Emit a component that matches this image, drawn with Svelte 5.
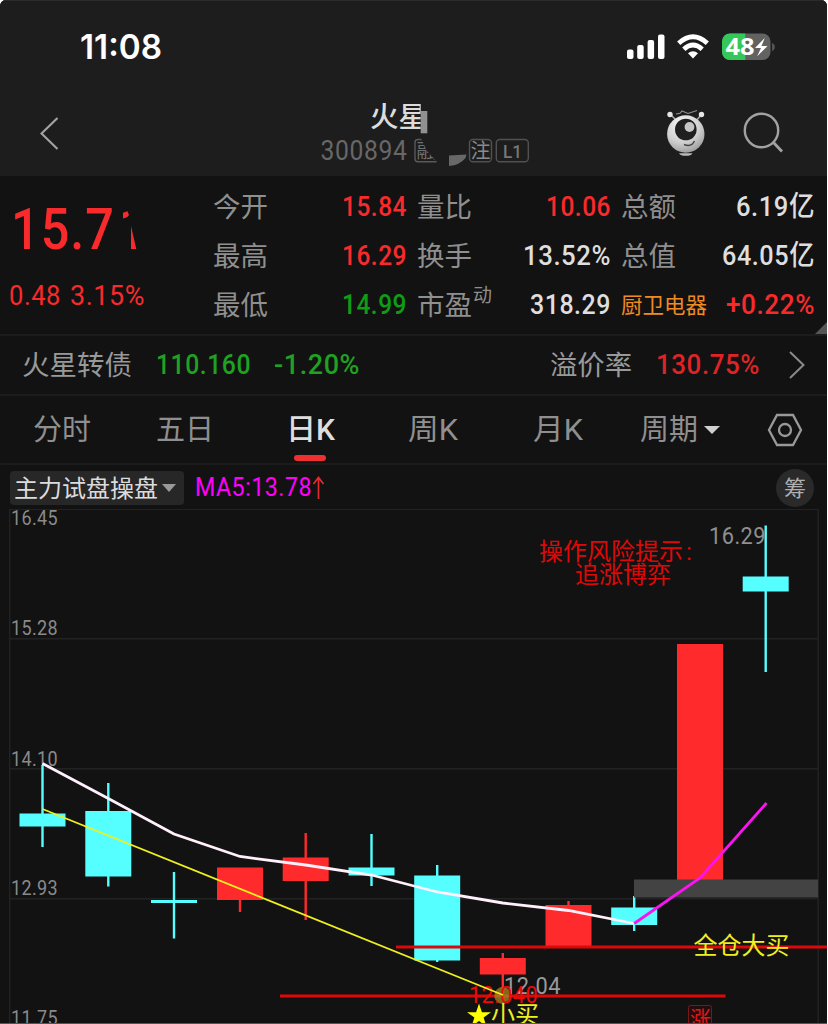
<script>
  const RED = '#f92a2c', GREEN = '#0f9d16', WHITE = '#dedede', GREY = '#8f8f8f';
  const CYAN = '#55ffff', HOT = '#ff2a2b';

  const quotes = [
    [
      { label: '今开', value: '15.84', w: 65, color: RED },
      { label: '量比', value: '10.06', w: 65, color: RED },
      { label: '总额', value: '6.19亿', w: 79, color: WHITE }
    ],
    [
      { label: '最高', value: '16.29', w: 65, color: RED },
      { label: '换手', value: '13.52%', w: 88, color: WHITE },
      { label: '总值', value: '64.05亿', w: 93, color: WHITE }
    ],
    [
      { label: '最低', value: '14.99', w: 65, color: GREEN },
      { label: '市盈', sup: '动', value: '318.29', w: 81, color: WHITE },
      { label: '厨卫电器', sector: true, value: '+0.22%', w: 89, color: RED }
    ]
  ];

  const candles = [
    { x: 42.5, top: 813.5, bottom: 826.5, high: 765, low: 847, color: CYAN },
    { x: 108.3, top: 811, bottom: 876.5, high: 783, low: 886.5, color: CYAN },
    { x: 174, top: 900, bottom: 903, high: 872, low: 938.5, color: CYAN },
    { x: 240, top: 867.5, bottom: 900, high: 868, low: 912, color: HOT },
    { x: 305.7, top: 857.5, bottom: 881, high: 833, low: 920, color: HOT },
    { x: 371.5, top: 867.5, bottom: 875.5, high: 834, low: 886, color: CYAN },
    { x: 437.2, top: 875.5, bottom: 960.5, high: 865, low: 962, color: CYAN },
    { x: 502.8, top: 958, bottom: 974.5, high: 953, low: 996, color: HOT },
    { x: 568.5, top: 905, bottom: 947, high: 901, low: 947, color: HOT },
    { x: 634.2, top: 907.5, bottom: 925, high: 896, low: 931, color: CYAN },
    { x: 700, top: 644, bottom: 880, high: 644, low: 880, color: HOT },
    { x: 765.7, top: 576.5, bottom: 591.5, high: 525.5, low: 672, color: CYAN }
  ];

  const axis = [
    ['16.45', 525], ['15.28', 635], ['14.10', 766], ['12.93', 895], ['11.75', 1025]
  ];
</script>

{#snippet run(text, w, size, color, weight = 500, spacing = 0)}
  <svg class="run" width={w} height={size}>
    <text x="0" y={size * (spacing ? 0.83 : 0.87)} font-size={size} fill={color} font-weight={weight}
      letter-spacing={spacing} textLength={w} lengthAdjust="spacingAndGlyphs">{text}</text>
  </svg>
{/snippet}

<div class="screen">
  <header>
    <div class="status">
      {@render run('11:08', 82, 33.5, '#fff', 600)}
      <svg class="signals" width="146" height="30" viewBox="627 32 146 30">
        <g fill="#fff">
          <rect x="627" y="49.5" width="6.5" height="9.5" rx="2" />
          <rect x="637.2" y="45" width="6.5" height="14" rx="2" />
          <rect x="647.6" y="40" width="6.5" height="19" rx="2" />
          <rect x="658" y="34.5" width="6.5" height="24.5" rx="2" />
          <path d="M693 58.5l-5-5.2q5-4 10 0z" />
        </g>
        <g fill="none" stroke="#fff" stroke-width="4.8">
          <path d="M678.7 43.2Q693 30.5 707.3 43.2" />
          <path d="M683.8 49.2Q693 41 702.2 49.2" />
        </g>
        <clipPath id="charge"><rect x="722" y="33.5" width="48.5" height="26.5" rx="8" /></clipPath>
        <g clip-path="url(#charge)">
          <rect x="722" y="33" width="49" height="28" fill="#626262" />
          <rect x="722" y="33" width="23.3" height="28" fill="#34c759" />
        </g>
        <path d="M772 43q2.8 1 2.8 4t-2.8 4z" fill="#555" />
        <text class="battery" x="725.5" y="55.3" font-size="24" font-weight="700" fill="#fff" textLength="29" lengthAdjust="spacingAndGlyphs">48</text>
        <path d="M764.8 38L755 48h6l-3.8 8.2L767.5 46h-6z" fill="#fff" />
      </svg>
    </div>

    <div class="nav">
      <svg width="20" height="34" viewBox="40 116 20 34" class="back">
        <path d="M57.5 118L41.5 133.5 57.5 149" fill="none" stroke="#a2a2a2" stroke-width="2.2" />
      </svg>
      <svg class="title" width="210" height="66" viewBox="320 101 210 66">
        <clipPath id="name"><rect x="365" y="95" width="55.7" height="42" /></clipPath>
        <text x="370" y="127" font-size="28.5" fill="#dcdcdc" font-weight="500" clip-path="url(#name)">火星</text>
        <rect x="420.7" y="111" width="6.6" height="22.3" fill="#919191" />
        <text x="320.5" y="160" font-size="27.5" fill="#676767" letter-spacing=".7" textLength="87" lengthAdjust="spacingAndGlyphs">300894</text>
        <clipPath id="margin"><path d="M412 136H420L427 151 438 163H412z" /></clipPath>
        <g clip-path="url(#margin)">
          <rect x="415" y="139.5" width="23" height="22.3" rx="3" fill="none" stroke="#5a5a5a" stroke-width="1.4" />
          <text x="416.5" y="158" font-size="19" fill="#707070">融</text>
        </g>
        <path d="M449 155.5L466.5 154.5 465.5 158Q460 165 449 166z" fill="#686868" />
        <rect x="469.5" y="139.5" width="22" height="22.3" rx="3.5" fill="none" stroke="#515151" stroke-width="1.4" />
        <text x="470.5" y="158.2" font-size="20" fill="#8b8b8b">注</text>
        <rect x="496.3" y="139.5" width="32" height="22.3" rx="3.5" fill="none" stroke="#515151" stroke-width="1.4" />
        <text x="503" y="158" font-size="19" font-weight="500" fill="#777" textLength="19" lengthAdjust="spacingAndGlyphs">L1</text>
      </svg>
      <svg class="robot" width="40" height="48" viewBox="666 109 40 48">
        <defs>
          <radialGradient id="shell" cx=".4" cy=".25" r=".8">
            <stop offset="0" stop-color="#fafafa" /><stop offset=".6" stop-color="#cfcfcf" /><stop offset="1" stop-color="#999" />
          </radialGradient>
        </defs>
        <path d="M671 115L677 121M701 115L696 121" stroke="#aaa" stroke-width="1.5" />
        <circle cx="670" cy="114.5" r="2.7" fill="#e6e6e6" /><circle cx="701.5" cy="114.5" r="2.7" fill="#e6e6e6" />
        <path d="M676 114L680 113.3 682 111 688 113.5 697 110.5" fill="none" stroke="#929292" stroke-width="1.1" />
        <circle cx="685.8" cy="134" r="18.7" fill="url(#shell)" />
        <circle cx="685.8" cy="129.5" r="10.8" fill="#202020" />
        <circle cx="689.5" cy="127" r="4.9" fill="#c6c6c6" />
        <path d="M684 144.5Q691.5 147.5 694.5 141" fill="none" stroke="#444" stroke-width="1.4" />
        <path d="M679 153.2H692.5Q691 155.8 685.8 155.8T679 153.2z" fill="#bbb" />
      </svg>
      <svg class="search" width="42" height="42" viewBox="742 112 42 42">
        <g fill="none" stroke="#a2a2a2" stroke-width="2.4"><circle cx="761.5" cy="130.5" r="16.7" /><path d="M773 142L782 151.5" stroke-width="2.8" /></g>
      </svg>
    </div>
  </header>

  <section class="quote">
    <div class="price">
      <svg class="run" width="140" height="58">
        <text x="-2" y="57" font-size="58" fill={RED} font-weight="500" letter-spacing="1.2" textLength="104" lengthAdjust="spacingAndGlyphs">15.7</text>
        <clipPath id="tail"><path d="M110 19L114 18 116 23 110 30zM118 34L123.5 58H118z" /></clipPath>
        <text x="102.5" y="57" font-size="58" fill={RED} font-weight="500" clip-path="url(#tail)">1</text>
      </svg>
      <div class="change">
        {@render run('0.48', 52, 28, RED, 400, 0.6)}
        {@render run('3.15%', 75, 28, RED, 400, 0.6)}
      </div>
    </div>
    <div class="grid">
      {#each quotes as row}
        {#each row as q}
          <div class="cell">
            <span class="label">
              {#if q.sector}
                {@render run(q.label, 86, 21.5, '#f08a22', 400)}
              {:else}
                {@render run(q.label, 55, 27.3, '#8f8f8f', 400)}
              {/if}
              {#if q.sup}<span class="sup">{@render run(q.sup, 19, 19, GREY, 400)}</span>{/if}
            </span>
            {@render run(q.value, q.w, 28, q.color, 500, 0.6)}
          </div>
        {/each}
      {/each}
    </div>
    <i class="corner"></i>
  </section>

  <section class="bond">
    {@render run('火星转债', 110, 27.5, '#999', 400)}
    <span class="gap1">{@render run('110.160', 95, 28, '#1fa122', 500, 0.6)}</span>
    <span class="gap2">{@render run('-1.20%', 86, 28, '#1fa122', 500, 0.6)}</span>
    <span class="push">{@render run('溢价率', 82, 27.5, '#999', 400)}</span>
    <span class="gap1">{@render run('130.75%', 104, 28, '#de2426', 500, 0.6)}</span>
    <svg class="more" width="18" height="30"><path d="M2 2L15.5 15 2 28" fill="none" stroke="#8a8a8a" stroke-width="2" /></svg>
  </section>

  <nav class="tabs">
    <span>{@render run('分时', 58, 29, GREY, 400)}</span>
    <span>{@render run('五日', 58, 29, GREY, 400)}</span>
    <span class="active">{@render run('日K', 49, 29, WHITE, 500)}</span>
    <span>{@render run('周K', 50, 29, GREY, 400)}</span>
    <span>{@render run('月K', 50, 29, GREY, 400)}</span>
    <span class="period">{@render run('周期', 58, 29, GREY, 400)}<i class="tri"></i></span>
    <svg class="gear" width="36" height="34" viewBox="0 0 36 34">
      <g fill="none" stroke="#999" stroke-width="2.3"><path d="M10 2H26L34 17 26 32H10L2 17z" /><circle cx="18" cy="17" r="6" /></g>
    </svg>
  </nav>

  <section class="indicator">
    <span class="picker">{@render run('主力试盘操盘', 144, 24, '#dcdcdc', 400)}<i class="tri small"></i></span>
    <span class="ma">{@render run('MA5:13.78', 117, 25, '#ff00ff', 400, 0.5)}</span>
    <svg width="13" height="25"><path d="M6.5 24V2M1.5 9L6.5 2.5 11.5 9" fill="none" stroke="#e02c2c" stroke-width="1.7" /></svg>
    <span class="chip">{@render run('筹', 22, 22, '#b0b0b0', 400)}</span>
  </section>

  <svg class="chart" width="828" height="515" viewBox="0 509 828 515">
    <g stroke="#222" stroke-width="1.5" fill="none">
      <path d="M9.7 1024V509.3H818.2V1024M10 638.7H818M10 768.7H818M10 898.7H818" />
    </g>
    {#each axis as [value, y]}
      <text x="11" {y} font-size="19.5" fill="#8a8a8a" letter-spacing=".4" textLength="47" lengthAdjust="spacingAndGlyphs">{value}</text>
    {/each}
    {#each candles as c}
      <rect x={c.x - 1.2} y={c.high} width="2.4" height={c.low - c.high} fill={c.color} />
      <rect x={c.x - 23} y={c.top} width="46" height={c.bottom - c.top} fill={c.color} />
    {/each}
    <rect x="634" y="879.5" width="184" height="18" fill="#434343" />
    <g stroke="#df0808" stroke-width="3">
      <path d="M396 947H828M280 996H725.5" />
    </g>
    <circle cx="502.8" cy="995.5" r="8.5" fill="#a18a20" opacity=".75" />
    <text x="504" y="994" font-size="23.5" fill="#999" letter-spacing=".5" textLength="57" lengthAdjust="spacingAndGlyphs">12.04</text>
    <text x="469" y="1003.3" font-size="23" fill="#ef0808" letter-spacing=".5" textLength="69" lengthAdjust="spacingAndGlyphs">12.040</text>
    <path d="M42.5 809L503 995" stroke="#efef20" stroke-width="1.8" />
    <path d="M42.5 763.5L108.3 798.5 174 834 240 856.5 305.7 865 371.5 875 437.2 892 502.8 903 568.5 910.5 634.2 923.5" fill="none" stroke="#fff0fc" stroke-width="2.8" />
    <path d="M634.2 923.5L700 878 766.5 803" fill="none" stroke="#fa14f2" stroke-width="2.8" />
    <text x="709" y="544" font-size="23.5" fill="#8f8f8f" letter-spacing=".5" textLength="57" lengthAdjust="spacingAndGlyphs">16.29</text>
    <g font-size="24">
      <text x="539" y="559.5" fill="#df0808">操作风险提示<tspan x="686">:</tspan></text>
      <text x="575" y="583.3" fill="#df0808">追涨博弈</text>
      <text x="693.5" y="954.3" fill="#efef20">全仓大买</text>
      <text x="491" y="1023" fill="#efef20">小买</text>
    </g>
    <path d="M479 1003.5L481.9 1012.2H491L483.6 1017.6 486.4 1026.3 479 1021 471.6 1026.3 474.4 1017.6 467 1012.2H476.1z" fill="#ff0" />
    <rect x="688.5" y="1005.5" width="23" height="24" rx="2" fill="#210d0d" stroke="#7a1717" />
    <text x="690" y="1025.5" font-size="21" fill="#e01818">涨</text>
    <path d="M0 1023.5H828" stroke="#555" />
  </svg>
</div>

<style>
  :global(body) { background: #fff; overflow: hidden; }
  .screen { width: 827px; height: 1024px; background: #121212; border-radius: 6px 6px 0 0; overflow: hidden; display: flex; flex-direction: column; }
  .screen, text { font-family: Roboto, "Noto Sans CJK SC", sans-serif; }
  .run { display: block; overflow: visible; flex: none; }
  .status .run text { font-family: Inter, sans-serif; }
  .battery { font-family: "Open Sans", sans-serif; }
  header { height: 176px; background: #1d1d1d; flex: none; box-shadow: inset 0 1px #2b2b2b; }
  .status { height: 92px; box-sizing: border-box; padding: 2px 54px 0 80px; display: flex; align-items: center; justify-content: space-between; }
  .signals { overflow: visible; }
  .nav { height: 84px; display: flex; align-items: center; padding-left: 40px; }
  .back { margin-top: -2px; }
  .title { margin-left: 260px; }
  .robot { margin-left: 136px; margin-top: -2px; }
  .search { margin-left: 36px; margin-top: -2px; }
  .quote { height: 158px; display: flex; position: relative; border-bottom: 2px solid #1c1c1c; flex: none; box-sizing: content-box; }
  .price { width: 213px; box-sizing: border-box; padding: 16px 0 0 13px; flex: none; }
  .change { display: flex; gap: 9px; margin: 32px 0 0 -4px; }
  .grid { display: grid; grid-template-columns: 194px 194px 194px; grid-auto-rows: 49px; column-gap: 10px; padding-top: 6px; }
  .cell { display: flex; align-items: center; justify-content: space-between; }
  .label { display: flex; align-items: center; }
  .sup { margin-top: -20px; margin-left: 1px; }
  .corner { position: absolute; right: 0; bottom: 0; border: 6px solid transparent; border-right-color: #555; border-bottom-color: #555; }
  .bond { height: 58px; border-bottom: 2px solid #1c1c1c; display: flex; align-items: center; padding: 0 21px 0 22px; flex: none; }
  .gap1 { margin-left: 24px; }
  .gap2 { margin-left: 23px; }
  .push { margin-left: auto; }
  .more { margin-left: 28px; }
  .tabs { height: 67px; border-bottom: 2px solid #1c1c1c; display: grid; grid-template-columns: 123px 130px 122px 125px 107px 127px 36px; align-items: center; padding-left: 33px; flex: none; }
  .tabs > span { height: 67px; display: flex; align-items: center; }
  .tabs .active { position: relative; }
  .active::after { content: ""; position: absolute; bottom: 2px; left: 8px; width: 32px; height: 6px; border-radius: 3px; background: #ee3030; }
  .tri { border: 8.5px solid transparent; border-top-color: #d0d0d0; border-bottom: 0; margin-left: 6px; }
  .small { border-width: 8px 7px 0; border-top-color: #999; margin-left: 4px; }
  .indicator { height: 44px; display: flex; align-items: center; padding: 1px 13px 0 10px; flex: none; box-sizing: border-box; }
  .picker { height: 34px; width: 174px; padding-left: 4px; box-sizing: border-box; background: #272727; border-radius: 4px; display: flex; align-items: center; }
  .ma { margin-left: 11px; }
  .chip { width: 38px; height: 38px; border-radius: 50%; background: #2a2a2a; margin-left: auto; display: grid; place-items: center; }
  .chart { flex: none; display: block; }
</style>
